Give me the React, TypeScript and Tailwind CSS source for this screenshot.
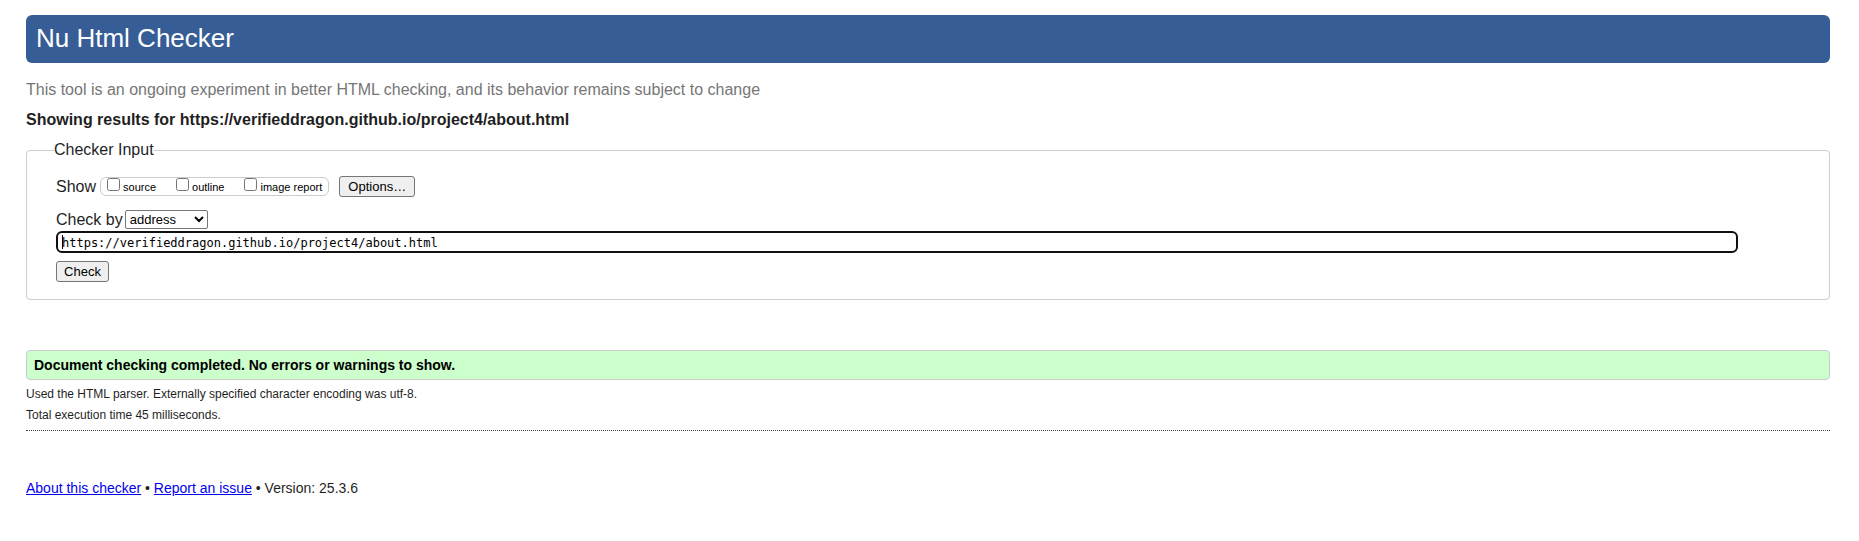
import { useState } from "react";

const reports = [
  { id: "source", label: "source" },
  { id: "outline", label: "outline" },
  { id: "imagereport", label: "image report" },
];

const buttonClass =
  "flex h-[21px] items-center justify-center rounded-[3px] border border-[#767676] bg-[#efefef] text-[13px] leading-4 text-black";

function CheckerForm() {
  const [address, setAddress] = useState(
    "https://verifieddragon.github.io/project4/about.html"
  );

  return (
    <form onSubmit={(event) => event.preventDefault()}>
      <fieldset className="mt-1.5 rounded-[4px] border border-[#cccccc] pb-[17px] pl-[29px] pr-[91px]">
        <legend className="-ml-0.5 text-base leading-6">Checker Input</legend>

        <div className="flex items-center pt-3.5">
          <span className="leading-[21px]">Show</span>
          <div className="ml-1 flex h-[19px] items-center gap-5 rounded-[6px] border border-[#cccccc] px-1.5">
            {reports.map((report) => (
              <div key={report.id} className="flex items-center gap-[3px]">
                <input id={report.id} type="checkbox" className="mb-1 size-[13px]" />
                <label htmlFor={report.id} className="pt-0.5 text-[11px] leading-[15px] text-black">
                  {report.label}
                </label>
              </div>
            ))}
          </div>
          <button type="button" className={`ml-2.5 w-[76px] ${buttonClass}`}>
            Options…
          </button>
        </div>

        <div className="mt-[13px] flex h-[19px] items-center gap-0.5">
          <label htmlFor="docselect">Check by</label>
          <select
            id="docselect"
            defaultValue="address"
            className="h-[19px] w-[83px] rounded-[2px] border border-[#767676] bg-white text-[13px] leading-4 text-black"
          >
            <option value="address">address</option>
            <option value="file">file upload</option>
            <option value="text">text input</option>
          </select>
        </div>

        <div className="relative mt-0.5">
          <input
            type="url"
            aria-label="Address of page to check"
            value={address}
            onChange={(event) => setAddress(event.target.value)}
            className="block h-[22px] w-full rounded-[6px] border-2 border-[#101010] bg-white px-1 pt-0.5 font-['DejaVu_Sans_Mono',monospace] text-[12px] leading-4 text-black outline-none"
          />
          <span className="absolute left-1.5 top-1 h-3.5 w-px bg-black" />
        </div>

        <button type="submit" className={`mt-2 w-[53px] ${buttonClass}`}>
          Check
        </button>
      </fieldset>
    </form>
  );
}

export default function App() {
  return (
    <div className="bg-white pl-[26px] pr-[29px] pt-[15px] font-['Liberation_Sans',Arial,sans-serif] text-base text-[#1f1f1f]">
      <header>
        <h1 className="rounded-[6px] bg-[#365d95] px-2.5 pb-0.5 text-[26px] leading-[46px] text-white">
          Nu Html Checker
        </h1>
        <p className="mt-[15px] leading-6 text-[#767676]">
          This tool is an ongoing experiment in better HTML checking, and its behavior remains
          subject to change
        </p>
      </header>

      <main>
        <h2 className="mt-1.5 font-bold leading-6">
          Showing results for https://verifieddragon.github.io/project4/about.html
        </h2>
        <CheckerForm />

        <section>
          <p className="mt-[50px] rounded-[4px] border border-[#cccccc] bg-[#ccffcc] px-[7px] text-sm font-bold leading-7 text-black">
            Document checking completed. No errors or warnings to show.
          </p>
          <p className="mt-1 text-xs leading-5">
            Used the HTML parser. Externally specified character encoding was utf-8.
          </p>
          <p className="mt-px text-xs leading-5">Total execution time 45 milliseconds.</p>
        </section>
      </main>

      <footer className="mt-[5px] border-t border-dotted border-[#444444] pt-[47px] text-sm leading-5">
        <a href="#about" className="text-[#0000ee] underline">
          About this checker
        </a>
        {" • "}
        <a href="#issues" className="text-[#0000ee] underline">
          Report an issue
        </a>
        {" • Version: 25.3.6"}
      </footer>
    </div>
  );
}
